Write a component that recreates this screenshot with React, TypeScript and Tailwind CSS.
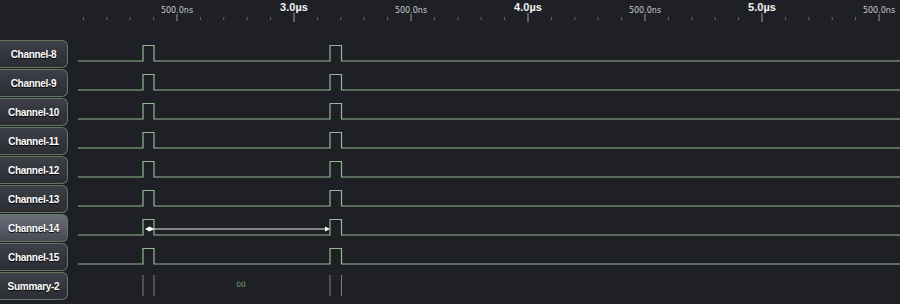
import React from 'react'

const channels = ['Channel-8', 'Channel-9', 'Channel-10', 'Channel-11', 'Channel-12', 'Channel-13', 'Channel-14', 'Channel-15']

// pixels per microsecond on the time ruler, 2.0µs sits at x=60
const PX_US = 234
const X0 = 60

const SIG = '#92ba92'

function Ruler() {
  const ticks = []
  for (let i = 1; i <= 36; i++) {
    const x = X0 + (i * PX_US) / 10
    if (x > 900) break
    const major = i % 10 === 0
    const mid = i % 5 === 0 && !major
    ticks.push(
      <line
        key={i}
        x1={x}
        x2={x}
        y1={major ? 13 : mid ? 14 : 17}
        y2={major ? 22 : mid ? 21 : 20}
        stroke={major || mid ? '#9a9ca0' : '#6a6c70'}
        strokeWidth={1}
      />
    )
  }
  const majors = [3, 4, 5]
  const mids = [2.5, 3.5, 4.5, 5.5]
  return (
    <svg width={900} height={40} className="block">
      {ticks}
      {majors.map((m) => (
        <text
          key={m}
          x={X0 + (m - 2) * PX_US}
          y={11}
          textAnchor="middle"
          fill="#f2f2f2"
          fontSize={11}
          fontWeight={700}
          fontFamily="'Liberation Sans', Arial, sans-serif"
        >
          {m.toFixed(1)}µs
        </text>
      ))}
      {mids.map((m) => (
        <text
          key={m}
          x={X0 + (m - 2) * PX_US}
          y={13}
          textAnchor="middle"
          fill="#c8c9cc"
          fontSize={8}
          fontFamily="'DejaVu Sans', sans-serif"
        >
          500.0ns
        </text>
      ))}
    </svg>
  )
}

function Signal({ marker }: { marker?: boolean }) {
  const lo = 21
  const hi = 5.5
  const d = `M78 ${lo} H143 V${hi} H154 V${lo} H330 V${hi} H341.5 V${lo} H900`
  return (
    <svg width={832} height={28} viewBox="68 0 832 28" className="block">
      <path d={d} fill="none" stroke={SIG} strokeWidth={1.2} />
      {marker && (
        <g>
          <line x1={150} x2={327} y1={15} y2={15} stroke="#e8e8e8" strokeWidth={1.2} />
          <polygon points="145,15 149.5,12.5 154,15 149.5,17.5" fill="#ffffff" />
          <polygon points="325,12.5 330,15 325,17.5" fill="#ffffff" />
        </g>
      )}
    </svg>
  )
}

function Summary() {
  return (
    <svg width={832} height={28} viewBox="68 0 832 28" className="block">
      {[143, 154, 330, 341.5].map((x) => (
        <line key={x} x1={x} x2={x} y1={3} y2={24} stroke="#7c7e82" strokeWidth={1} />
      ))}
      <text x={241} y={15} textAnchor="middle" fill="#7f9f7f" fontSize={7.5} fontFamily="'DejaVu Sans', sans-serif">
        00
      </text>
    </svg>
  )
}

function Label({ name, active }: { name: string; active?: boolean }) {
  return (
    <div
      className={`w-[68px] h-[28px] shrink-0 flex items-center justify-center rounded-r-[6px] border border-l-0 border-[#627762] text-[10px] tracking-[-0.3px] font-bold text-white [text-shadow:0_1px_1px_#000] ${
        active ? 'bg-gradient-to-b from-[#6c707a] to-[#474a54]' : 'bg-gradient-to-b from-[#3d4048] to-[#2b2d33]'
      }`}
      style={{ fontFamily: "'Liberation Sans', Arial, sans-serif" }}
    >
      {name}
    </div>
  )
}

export default function App() {
  return (
    <div className="w-[900px] h-[304px] bg-[#1e2025] overflow-hidden">
      <Ruler />
      <div className="flex flex-col gap-px">
        {channels.map((c) => (
          <div key={c} className="flex h-[28px]">
            <Label name={c} active={c === 'Channel-14'} />
            <Signal marker={c === 'Channel-14'} />
          </div>
        ))}
        <div className="flex h-[28px]">
          <Label name="Summary-2" />
          <Summary />
        </div>
      </div>
    </div>
  )
}
